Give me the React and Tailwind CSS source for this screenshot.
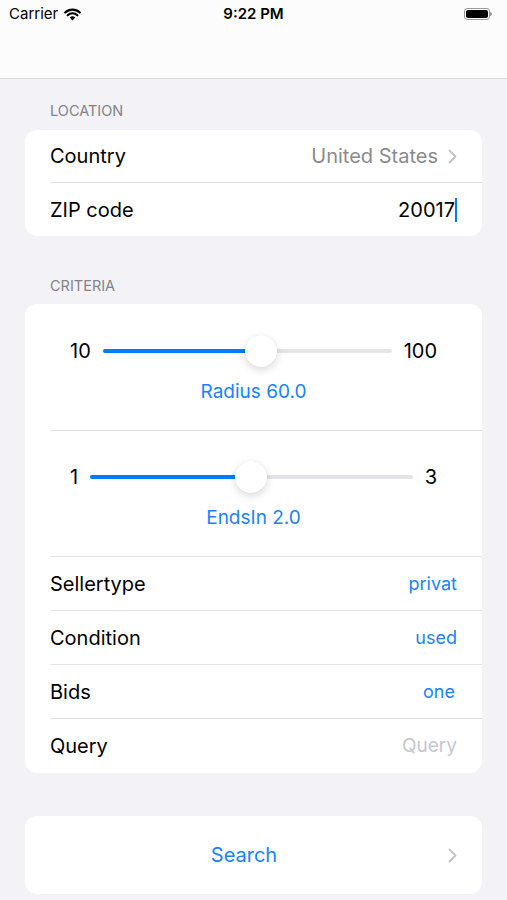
import React from "react";

const font = { fontFamily: "Inter, 'Noto Sans', sans-serif" };

function Chevron({ className }) {
  return (
    <svg width="9" height="15" viewBox="0 0 9 15" className={className}>
      <path d="M1.5 1.5 L7.5 7.5 L1.5 13.5" fill="none" stroke="#c4c4c7" strokeWidth="2" strokeLinecap="round" strokeLinejoin="round" />
    </svg>
  );
}

function Slider({ min, max, value, label, top = "pt-[30px]" }) {
  const pct = (value - min) / (max - min);
  return (
    <div className={`flex flex-col items-center ${top} pb-[26px] border-b border-[#e3e3e6]`}>
      <div className="flex items-center w-full pl-[20px] pr-[45px] h-8">
        <span className="text-[20px] text-black leading-none">{min}</span>
        <div className="relative flex-1 mx-[12px] h-8 flex items-center">
          <div className="w-full h-[4px] rounded-full bg-[#e4e4e8]" />
          <div
            className="absolute left-0 h-[4px] rounded-full bg-[#007aff]"
            style={{ width: `calc(${pct} * (100% - 32px) + 16px)` }}
          />
          <div
            className="absolute top-0 w-8 h-8 rounded-full bg-white shadow-[0_3px_8px_rgba(0,0,0,0.15),0_0_1px_rgba(0,0,0,0.1)]"
            style={{ left: `calc(${pct} * (100% - 32px))` }}
          />
        </div>
        <span className="text-[20px] text-black leading-none">{max}</span>
      </div>
      <div className="mt-[13px] h-6 flex items-center text-[19px] text-[#1a82f7] -ml-[25px]">{label}</div>
    </div>
  );
}

function Row({ label, value, valueClass, last, h = "h-[54px]", children }) {
  return (
    <div className="pl-[25px]">
      <div className={`flex items-center justify-between ${h} pr-[25px] ${last ? "" : "border-b border-[#e3e3e6]"}`}>
        <span className="text-[20px] text-black">{label}</span>
        {children || <span className={valueClass}>{value}</span>}
      </div>
    </div>
  );
}

export default function App() {
  return (
    <div className="min-h-[900px] bg-[#f2f2f7]" style={font}>
      {/* status + nav bar */}
      <div className="bg-[#fcfcfc] h-[79px] border-b border-[#d8d8dc]">
        <div className="flex items-center justify-between h-[28px] px-[9px]">
          <div className="flex items-center gap-[6px] w-[120px]">
            <span className="text-[15px] text-black">Carrier</span>
            <svg width="17" height="13" viewBox="0 0 17 13">
              <path d="M8.5 12.5 L5.7 9.5 A4 4 0 0 1 11.3 9.5 Z" fill="#000" />
              <path d="M3.6 7.3 A7 7 0 0 1 13.4 7.3" fill="none" stroke="#000" strokeWidth="2.1" strokeLinecap="round" />
              <path d="M1.2 4.6 A10.5 10.5 0 0 1 15.8 4.6" fill="none" stroke="#000" strokeWidth="2.1" strokeLinecap="round" />
            </svg>
          </div>
          <span className="text-[15px] font-semibold text-black">9:22 PM</span>
          <div className="w-[120px] flex justify-end pr-[6px]">
            <div className="flex items-center">
              <div className="w-[26px] h-[12px] rounded-[3px] border border-[#9a9a9a] p-[1px]">
                <div className="w-full h-full rounded-[2px] bg-black" />
              </div>
              <div className="w-[2px] h-[4px] rounded-r-sm bg-[#9a9a9a]" />
            </div>
          </div>
        </div>
      </div>

      <div className="px-[25px]">
        <div className="pt-[22px] pb-[9px] pl-[25px] text-[14.5px] text-[#838388] leading-[20px]">LOCATION</div>
        <div className="bg-white rounded-[12px] overflow-hidden">
          <Row label="Country" h="h-[53px]">
            <span className="flex items-center gap-[10px]">
              <span className="text-[20px] text-[#8a8a8e]">United States</span>
              <Chevron />
            </span>
          </Row>
          <Row label="ZIP code" h="h-[53px]" last>
            <span className="flex items-center text-[20px] text-black">
              20017<span className="inline-block w-[2px] h-[24px] bg-[#007aff]" />
            </span>
          </Row>
        </div>

        <div className="pt-[40px] pb-[8px] pl-[25px] text-[14.5px] text-[#838388] leading-[20px]">CRITERIA</div>
        <div className="bg-white rounded-[12px] overflow-hidden">
          <div className="pl-[25px]">
            <Slider min={10} max={100} value={60} label="Radius 60.0" top="pt-[31px]" />
            <Slider min={1} max={3} value={2} label="EndsIn 2.0" />
          </div>
          <Row label="Sellertype" value="privat" valueClass="text-[18px] text-[#1a82f7]" />
          <Row label="Condition" value="used" valueClass="text-[18px] text-[#1a82f7]" />
          <Row label="Bids" value="one" valueClass="text-[18px] text-[#1a82f7] pr-[2px]" />
          <Row label="Query" value="Query" valueClass="text-[19px] text-[#c7c7cc]" last />
        </div>

        <div className="mt-[43px] bg-white rounded-[12px] h-[78px] flex items-center pl-[25px] pr-[25px] gap-[10px]">
          <div className="flex-1 text-center text-[20px] text-[#1a82f7]">Search</div>
          <Chevron />
        </div>
      </div>
    </div>
  );
}
